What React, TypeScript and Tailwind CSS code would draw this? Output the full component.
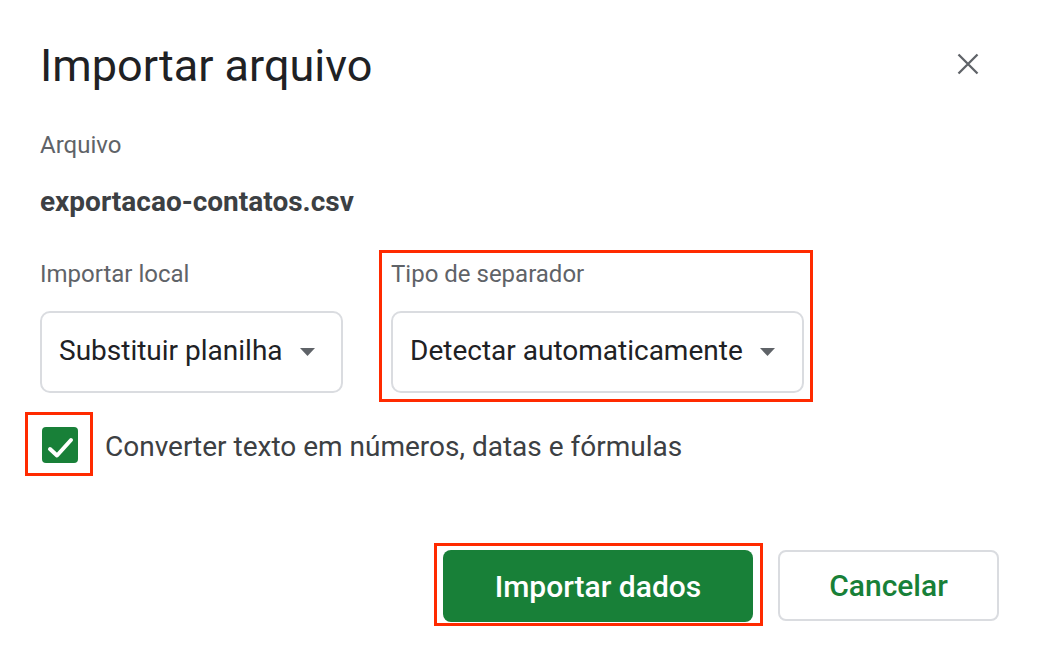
import React from 'react';

function Caret() {
    return (
        <svg width="15" height="8" viewBox="0 0 15 8" className="shrink-0">
            <path d="M0 0 L15 0 L7.5 8 Z" fill="#5f6368" />
        </svg>
    );
}

function SelectBox({ value }: { value: string }) {
    return (
        <div className="flex items-center h-[82px] pl-[17px] pr-[27px] border-2 border-[#dadce0] rounded-[10px] bg-white">
            <span className="pb-[3px] text-[28px] leading-[32px] text-[#202124] whitespace-nowrap">{value}</span>
            <span className="ml-[17px] pb-[1px]">
                <Caret />
            </span>
        </div>
    );
}

function RedMark({ className }: { className: string }) {
    return <span className={`absolute border-[3px] border-[#ff2a00] pointer-events-none ${className}`} />;
}

export default function App() {
    return (
        <div
            className="w-[1040px] h-[654px] bg-white px-[40px] overflow-hidden"
            style={{ fontFamily: 'Roboto, "Liberation Sans", sans-serif' }}
        >
            <div className="flex items-start justify-between pt-[40px]">
                <h1 className="text-[45px] leading-[52px] text-[#202124] font-normal">Importar arquivo</h1>
                <button className="mt-[13px] mr-[21px]">
                    <svg width="22" height="22" viewBox="0 0 22 22">
                        <path d="M1.5 1.5 L20.5 20.5 M20.5 1.5 L1.5 20.5" stroke="#5f6368" strokeWidth="2.3" fill="none" />
                    </svg>
                </button>
            </div>

            <div className="mt-[39px] text-[24px] leading-[28px] text-[#5f6368]">Arquivo</div>
            <div className="mt-[27px] text-[28px] leading-[32px] font-bold text-[#3c4043]">exportacao-contatos.csv</div>

            <div className="flex mt-[42px] gap-[48px]">
                <div className="flex flex-col w-[303px]">
                    <div className="text-[24px] leading-[28px] text-[#5f6368]">Importar local</div>
                    <div className="mt-[23px]">
                        <SelectBox value="Substituir planilha" />
                    </div>
                </div>
                <div className="relative flex flex-col">
                    <div className="text-[24px] leading-[28px] text-[#5f6368]">Tipo de separador</div>
                    <div className="mt-[23px]">
                        <SelectBox value="Detectar automaticamente" />
                    </div>
                    <RedMark className="-left-[12px] -top-[10px] -right-[9px] -bottom-[9px]" />
                </div>
            </div>

            <div className="flex items-start mt-[34px] ml-[2px]">
                <div className="relative w-[36px] h-[36px] rounded-[4px] bg-[#188038] shrink-0">
                    <svg width="36" height="36" viewBox="0 0 36 36">
                        <path d="M8 22 L15 28.5 L29 13" fill="none" stroke="#fff" strokeWidth="4" strokeLinecap="round" strokeLinejoin="round" />
                    </svg>
                    <RedMark className="-left-[17px] -top-[15px] -right-[15px] -bottom-[13px]" />
                </div>
                <span className="ml-[27px] text-[28px] leading-[40px] text-[#3c4043]">
                    Converter texto em números, datas e fórmulas
                </span>
            </div>

            <div className="flex justify-end mt-[83px] mr-[1px] gap-[25px]">
                <div className="relative">
                    <button className="w-[310px] h-[72px] rounded-[8px] bg-[#188038] text-white text-[30px] font-medium">
                        Importar dados
                    </button>
                    <RedMark className="-left-[9px] -top-[7px] -right-[10px] -bottom-[4px]" />
                </div>
                <button className="w-[221px] h-[71px] rounded-[8px] border-2 border-[#dadce0] bg-white text-[#188038] text-[30px] font-medium">
                    Cancelar
                </button>
            </div>
        </div>
    );
}
